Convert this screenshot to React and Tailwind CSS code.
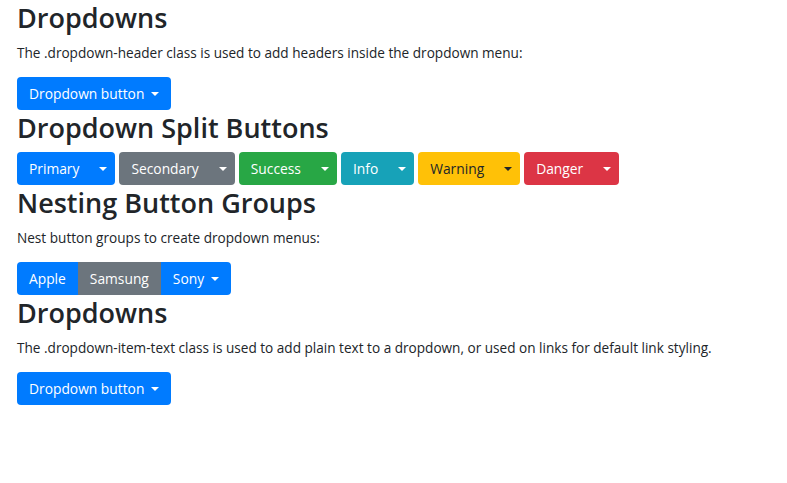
import React from "react";

const font = { fontFamily: '"Open Sans", "Segoe UI", sans-serif' };

function Caret({ dark }) {
  return (
    <span
      className={`inline-block w-0 h-0 border-t-[4px] border-x-[4px] border-x-transparent ml-[7px] ${
        dark ? "border-t-[#212529]" : "border-t-white"
      }`}
    />
  );
}

function Heading({ children }) {
  return (
    <h2 className="text-[27px] leading-[35px] font-semibold text-[#212529] mb-[7px]">
      {children}
    </h2>
  );
}

function Para({ children }) {
  return <p className="text-[13.6px] leading-[21px] text-[#212529] mb-[14px]">{children}</p>;
}

function DropdownButton() {
  return (
    <button className="inline-flex items-center h-[33px] pt-[1px] px-[12px] rounded-[4px] bg-[#007bff] text-white text-[13.8px]">
      Dropdown button
      <Caret />
    </button>
  );
}

const splits = [
  { label: "Primary", bg: "bg-[#007bff]", text: "text-white" },
  { label: "Secondary", bg: "bg-[#6c757d]", text: "text-white" },
  { label: "Success", bg: "bg-[#28a745]", text: "text-white" },
  { label: "Info", bg: "bg-[#17a2b8]", text: "text-white" },
  { label: "Warning", bg: "bg-[#ffc107]", text: "text-[#212529]" },
  { label: "Danger", bg: "bg-[#dc3545]", text: "text-white" },
];

export default function App() {
  return (
    <div className="px-[17px] bg-white min-h-screen" style={font}>
      <Heading>Dropdowns</Heading>
      <Para>The .dropdown-header class is used to add headers inside the dropdown menu:</Para>
      <DropdownButton />

      <Heading>Dropdown Split Buttons</Heading>
      <div className="flex gap-[4px]">
        {splits.map((s) => (
          <div key={s.label} className={`flex h-[33px] rounded-[4px] ${s.bg} ${s.text} text-[13.8px]`}>
            <button className="pt-[1px] px-[12px]">{s.label}</button>
            <button className="flex items-center pt-[1px] pl-[1px] pr-[8px]">
              <Caret dark={s.label === "Warning"} />
            </button>
          </div>
        ))}
      </div>

      <Heading>Nesting Button Groups</Heading>
      <Para>Nest button groups to create dropdown menus:</Para>
      <div className="inline-flex h-[33px] rounded-[4px] overflow-hidden text-white text-[13.8px]">
        <button className="pt-[1px] px-[12px] bg-[#007bff]">Apple</button>
        <button className="pt-[1px] px-[12px] bg-[#6c757d]">Samsung</button>
        <button className="flex items-center pt-[1px] px-[12px] bg-[#007bff]">
          Sony
          <Caret />
        </button>
      </div>

      <Heading>Dropdowns</Heading>
      <Para>
        The .dropdown-item-text class is used to add plain text to a dropdown, or used on links for default link styling.
      </Para>
      <DropdownButton />
    </div>
  );
}
